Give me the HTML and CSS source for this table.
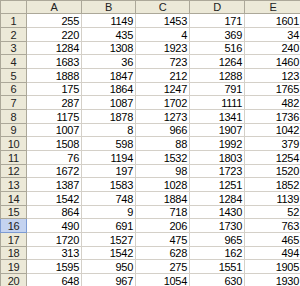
FILE: index.html
```html
<!DOCTYPE html>
<html>
<head>
<meta charset="utf-8">
<link rel="stylesheet" href="styles.css">
</head>
<body>
<table class="sheet">
<colgroup>
<col class="c-hdr"><col class="c-a"><col class="c-b"><col class="c-c"><col class="c-d"><col class="c-e">
</colgroup>
<thead>
<tr class="col-head"><th class="corner"></th><th>A</th><th>B</th><th>C</th><th>D</th><th>E</th></tr>
</thead>
<tbody>
<tr><th>1</th><td>255</td><td>1149</td><td>1453</td><td>171</td><td>1601</td></tr>
<tr><th>2</th><td>220</td><td>435</td><td>4</td><td>369</td><td>34</td></tr>
<tr><th>3</th><td>1284</td><td>1308</td><td>1923</td><td>516</td><td>240</td></tr>
<tr><th>4</th><td>1683</td><td>36</td><td>723</td><td>1264</td><td>1460</td></tr>
<tr><th>5</th><td>1888</td><td>1847</td><td>212</td><td>1288</td><td>123</td></tr>
<tr><th>6</th><td>175</td><td>1864</td><td>1247</td><td>791</td><td>1765</td></tr>
<tr><th>7</th><td>287</td><td>1087</td><td>1702</td><td>1111</td><td>482</td></tr>
<tr><th>8</th><td>1175</td><td>1878</td><td>1273</td><td>1341</td><td>1736</td></tr>
<tr><th>9</th><td>1007</td><td>8</td><td>966</td><td>1907</td><td>1042</td></tr>
<tr><th>10</th><td>1508</td><td>598</td><td>88</td><td>1992</td><td>379</td></tr>
<tr><th>11</th><td>76</td><td>1194</td><td>1532</td><td>1803</td><td>1254</td></tr>
<tr><th>12</th><td>1672</td><td>197</td><td>98</td><td>1723</td><td>1520</td></tr>
<tr><th>13</th><td>1387</td><td>1583</td><td>1028</td><td>1251</td><td>1852</td></tr>
<tr><th>14</th><td>1542</td><td>748</td><td>1884</td><td>1284</td><td>1139</td></tr>
<tr><th>15</th><td>864</td><td>9</td><td>718</td><td>1430</td><td>52</td></tr>
<tr><th class="active">16</th><td>490</td><td>691</td><td>206</td><td>1730</td><td>763</td></tr>
<tr><th>17</th><td>1720</td><td>1527</td><td>475</td><td>965</td><td>465</td></tr>
<tr><th>18</th><td>313</td><td>1542</td><td>628</td><td>162</td><td>494</td></tr>
<tr><th>19</th><td>1595</td><td>950</td><td>275</td><td>1551</td><td>1905</td></tr>
<tr><th>20</th><td>648</td><td>967</td><td>1054</td><td>630</td><td>1930</td></tr>
</tbody>
</table>
</body>
</html>
```
FILE: styles.css
```css
html, body {
  margin: 0;
  padding: 0;
  background: #ffffff;
  overflow: hidden;
}
.sheet {
  border-collapse: collapse;
  table-layout: fixed;
  width: 301px;
  font-family: "Liberation Sans", Arial, sans-serif;
  font-size: 11px;
  letter-spacing: -0.3px;
  color: #000000;
}
.c-hdr { width: 26px; }
.c-a { width: 55px; }
.c-b { width: 54px; }
.c-c { width: 54px; }
.c-d { width: 55px; }
.c-e { width: 57px; }
.sheet th, .sheet td {
  padding: 0 2px;
  line-height: 12px;
  overflow: hidden;
  white-space: nowrap;
}
.sheet td {
  border: 1px solid #d4d0c8;
  text-align: right;
  vertical-align: bottom;
}
.sheet th {
  background: #ece9d8;
  border: 1px solid #aca899;
  font-weight: normal;
  text-align: center;
  color: #222222;
}
.sheet th.active {
  background: #c4d3f0;
  border: 1px solid #7d9bd3;
}
.col-head {
  height: 13px;
}
.sheet tbody tr {
  height: 14px;
}
.sheet tbody tr:nth-child(3n) {
  height: 13px;
}
```
